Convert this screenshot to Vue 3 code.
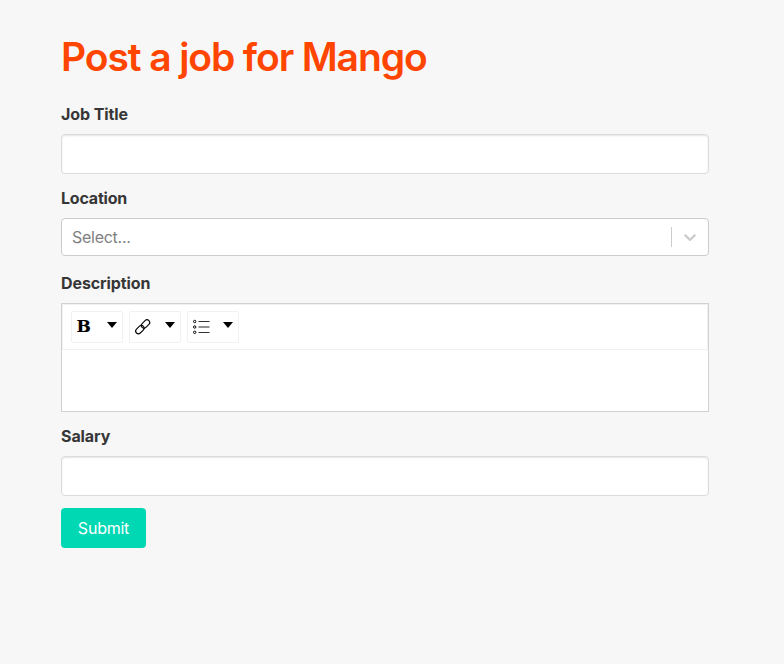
<script setup>
const tools = ['bold', 'link', 'list']
</script>

<template>
  <main class="page">
    <h1 class="title">Post a job for Mango</h1>
    <form class="form" @submit.prevent>
      <div class="field">
        <label class="label title-label" for="job">Job Title</label>
        <input id="job" class="input" type="text" />
      </div>
      <div class="field location">
        <label class="label location-label">Location</label>
        <div class="select">
          <span class="placeholder">Select...</span>
          <span class="separator"></span>
          <svg class="chevron" width="20" height="20" viewBox="0 0 20 20">
            <path d="M4.516 7.548c0.436-0.446 1.043-0.481 1.576 0l3.908 3.747 3.908-3.747c0.533-0.481 1.141-0.446 1.574 0 0.436 0.445 0.408 1.197 0 1.615-0.406 0.418-4.695 4.502-4.695 4.502-0.217 0.223-0.502 0.335-0.787 0.335s-0.57-0.112-0.789-0.335c0 0-4.287-4.084-4.695-4.502s-0.436-1.17 0-1.615z" />
          </svg>
        </div>
      </div>
      <div class="field">
        <label class="label description-label">Description</label>
        <div class="editor">
          <div class="toolbar">
            <button v-for="tool in tools" :key="tool" class="tool" type="button">
              <span v-if="tool === 'bold'" class="bold">B</span>
              <svg v-else-if="tool === 'link'" class="icon" width="16" height="16" viewBox="0 0 16 16" fill="none" stroke="#000" stroke-width="1.1">
                <rect x="-4.8" y="-2.7" width="9.6" height="5.4" rx="2.7" transform="translate(10.5 5) rotate(-45)" />
                <rect x="-4.8" y="-2.7" width="9.6" height="5.4" rx="2.7" transform="translate(4.9 10.6) rotate(-45)" />
              </svg>
              <svg v-else class="icon" width="18" height="16" viewBox="0 0 18 16" fill="none" stroke="#000">
                <circle cx="1.7" cy="2.5" r="1.2" />
                <circle cx="1.7" cy="8" r="1.2" />
                <circle cx="1.7" cy="13.3" r="1.2" />
                <path d="M5.5 2.5h11M5.5 13.5h11" stroke="#333" />
                <path d="M5.5 8h11" stroke="#777" stroke-width="1.6" />
              </svg>
              <span class="caret"></span>
            </button>
          </div>
        </div>
      </div>
      <div class="field">
        <label class="label salary-label" for="salary">Salary</label>
        <input id="salary" class="input" type="text" />
      </div>
      <button class="submit" type="submit">Submit</button>
    </form>
  </main>
</template>

<style>
body {
  background: #f7f7f7;
}
</style>

<style scoped>
.page {
  box-sizing: border-box;
  width: 784px;
  min-height: 664px;
  padding: 34px 75px 0 61px;
  background: #f7f7f7;
  font-family: Inter, "Liberation Sans", sans-serif;
  font-size: 16px;
  line-height: 24px;
  color: #363636;
}
.title {
  margin: 0 0 23px;
  font-size: 39px;
  line-height: 45px;
  font-weight: 600;
  letter-spacing: -1.1px;
  color: #ff4500;
  white-space: nowrap;
}
.field {
  margin-bottom: 12px;
}
.location {
  margin-bottom: 15px;
}
.label {
  display: block;
  margin-bottom: 8px;
  font-weight: 700;
  letter-spacing: -0.1px;
}
.location-label {
  letter-spacing: -0.2px;
}
.input {
  display: block;
  box-sizing: border-box;
  width: 100%;
  height: 40px;
  padding: 0 10px;
  border: 1px solid #dbdbdb;
  border-radius: 4px;
  background: #fff;
  box-shadow: inset 0 1px 2px rgba(10, 10, 10, 0.1);
  font: inherit;
  outline: none;
}
.select {
  display: flex;
  align-items: center;
  box-sizing: border-box;
  height: 38px;
  padding: 0 8px 0 10px;
  border: 1px solid #ccc;
  border-radius: 4px;
  background: #fff;
}
.placeholder {
  flex: 1;
  color: #808080;
  letter-spacing: -0.27px;
}
.separator {
  width: 1px;
  height: 20px;
  margin-right: 8px;
  background: #ccc;
}
.chevron {
  fill: #ccc;
}
.editor {
  box-sizing: border-box;
  height: 109px;
  border: 1px solid #d1d1d1;
  background: #fff;
}
.toolbar {
  display: flex;
  gap: 6px;
  box-sizing: border-box;
  height: 46px;
  padding: 6px 8px;
  border: 1px solid #f1f1f1;
}
.tool {
  display: flex;
  align-items: center;
  justify-content: space-between;
  box-sizing: border-box;
  width: 52px;
  height: 32px;
  padding: 0 5px;
  border: 1px solid #f1f1f1;
  border-radius: 2px;
  background: #fff;
  color: #000;
}
.bold {
  font: 700 16px/16px "DejaVu Serif", serif;
  -webkit-text-stroke: 0.15px #000;
  transform: scaleX(1.06);
}
.caret {
  margin-bottom: 5px;
  border-top: 6px solid #000;
  border-right: 5px solid transparent;
  border-left: 5px solid transparent;
}
.submit {
  display: block;
  width: 85px;
  height: 40px;
  padding: 0;
  border: 0;
  border-radius: 4px;
  background: #00d8b4;
  color: #fff;
  font: inherit;
  letter-spacing: -0.23px;
}
</style>
